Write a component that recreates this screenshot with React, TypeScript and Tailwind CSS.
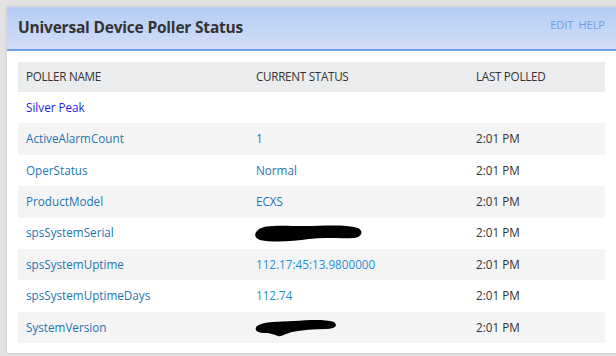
const ROWS: { name: string; value?: string; time?: string; redact?: "a" | "b"; light?: boolean }[] = [
  { name: "ActiveAlarmCount", value: "1", time: "2:01 PM" },
  { name: "OperStatus", value: "Normal", time: "2:01 PM" },
  { name: "ProductModel", value: "ECXS", time: "2:01 PM" },
  { name: "spsSystemSerial", redact: "a", time: "2:01 PM" },
  { name: "spsSystemUptime", value: "112.17:45:13.9800000", time: "2:01 PM", light: true },
  { name: "spsSystemUptimeDays", value: "112.74", time: "2:01 PM", light: true },
  { name: "SystemVersion", redact: "b", time: "2:01 PM" },
];

function Scribble({ kind }: { kind: "a" | "b" }) {
  if (kind === "a") {
    return (
      <svg width="110" height="22" viewBox="0 0 110 22" className="block">
        <path
          d="M4 8 C10 2 30 4 50 4 C70 4 90 2 104 6 C110 9 108 15 100 16 C85 17 70 15 55 17 C40 19 20 21 6 18 C0 16 0 11 4 8 Z"
          fill="#000"
        />
      </svg>
    );
  }
  return (
    <svg width="84" height="22" viewBox="0 0 84 22" className="block">
      <path
        d="M3 10 C10 5 25 6 40 5 C55 4 70 3 80 6 C84 9 82 13 72 13 C60 13 48 14 38 16 C30 18 28 21 24 20 C20 19 18 17 10 17 C2 17 0 13 3 10 Z"
        fill="#000"
      />
    </svg>
  );
}

export default function App() {
  return (
    <div className="w-[616px] h-[356px] bg-[#e2e2e2] pl-[7px] pt-[7px] overflow-hidden font-['Open_Sans',sans-serif]">
      <div className="bg-white h-[346px] shadow-[0_0_3px_rgba(0,0,0,0.15)]">
        <div className="h-[44px] flex items-center justify-between pl-[11px] pr-[11px] bg-gradient-to-b from-[#b6cdf6] to-[#d0ddf5] border-b-2 border-[#6f9ff0]">
          <span className="text-[15.5px] font-bold text-[#333] tracking-[-0.2px]">Universal Device Poller Status</span>
          <div className="flex gap-[5px] self-start pt-[10px] text-[11px] text-[#6e9cec]">
            <span>EDIT</span>
            <span>HELP</span>
          </div>
        </div>
        <div className="ml-[11px] mt-[11px] w-[587px] text-[11.7px]">
          <div className="grid grid-cols-[230px_220px_137px] h-[30px] items-center bg-[#ebeced] text-[#333] tracking-[-0.3px]">
            <span className="pl-[8px]">POLLER NAME</span>
            <span className="pl-[8px]">CURRENT STATUS</span>
            <span className="pl-[8px]">LAST POLLED</span>
          </div>
          <div className="grid grid-cols-[230px_220px_137px] h-[31.4px] items-center bg-white">
            <span className="pl-[8px] text-[#1f1fe6]">Silver Peak</span>
          </div>
          {ROWS.map((r, i) => (
            <div
              key={r.name}
              className={`grid grid-cols-[230px_220px_137px] h-[31.4px] items-center ${i % 2 === 0 ? "bg-[#f4f4f4]" : "bg-white"}`}
            >
              <span className="pl-[8px] text-[#1c76b2]">{r.name}</span>
              <span className={`pl-[6px] ${r.light ? "text-[#2192d6]" : "text-[#1c76b2]"}`}>
                {r.redact ? <Scribble kind={r.redact} /> : <span className="pl-[2px]">{r.value}</span>}
              </span>
              <span className="pl-[8px] text-[#333]">{r.time}</span>
            </div>
          ))}
        </div>
      </div>
    </div>
  );
}
